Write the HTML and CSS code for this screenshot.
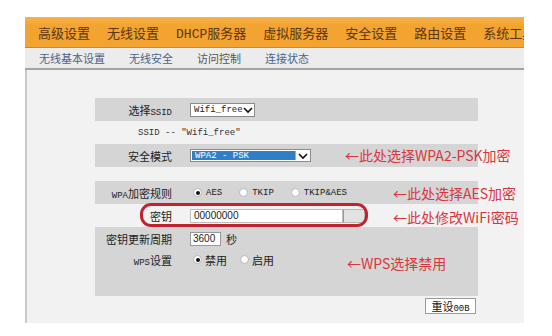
FILE: index.html
```html
<!DOCTYPE html>
<html>
<head>
<meta charset="utf-8">
<link rel="stylesheet" href="styles.css">
</head>
<body>
<div class="frame">
  <div class="nav">
    <span class="nav-item">高级设置</span>
    <span class="nav-item active">无线设置</span>
    <span class="nav-item">DHCP服务器</span>
    <span class="nav-item">虚拟服务器</span>
    <span class="nav-item">安全设置</span>
    <span class="nav-item">路由设置</span>
    <span class="nav-item">系统工具</span>
  </div>
  <div class="subnav">
    <span class="sub-item">无线基本设置</span>
    <span class="sub-item">无线安全</span>
    <span class="sub-item">访问控制</span>
    <span class="sub-item">连接状态</span>
  </div>
  <div class="panel">
    <div class="row grey">
      <span class="label">选择<span class="mono">SSID</span></span>
      <span class="select s1"><span class="sel-text">Wifi_free</span><span class="chev"><svg width="10" height="8" viewBox="0 0 10 8"><path d="M1 2 L5 6 L9 2" fill="none" stroke="#111" stroke-width="1.6"/></svg></span></span>
    </div>
    <div class="row plain">
      <span class="ssid-note">SSID -- "Wifi_free"</span>
    </div>
    <div class="row grey">
      <span class="label">安全模式</span>
      <span class="select s2"><span class="sel-text hl">WPA2 - PSK</span><span class="chev boxed"><svg width="10" height="8" viewBox="0 0 10 8"><path d="M1 2 L5 6 L9 2" fill="none" stroke="#111" stroke-width="1.6"/></svg></span></span>
      <span class="note n1">←此处选择WPA2-PSK加密</span>
    </div>
    <div class="spacer"></div>
    <div class="row grey">
      <span class="label"><span class="mono">WPA</span>加密规则</span>
      <span class="radios">
        <span class="radio-opt"><span class="radio on"></span><span class="mono">AES</span></span>
        <span class="radio-opt"><span class="radio"></span><span class="mono">TKIP</span></span>
        <span class="radio-opt"><span class="radio"></span><span class="mono">TKIP&amp;AES</span></span>
      </span>
      <span class="note n2">←此处选择AES加密</span>
    </div>
    <div class="row plain">
      <span class="label">密钥</span>
      <span class="textbox">00000000</span><span class="textbox-tail"></span>
      <span class="oval"></span>
      <span class="note n3">←此处修改WiFi密码</span>
    </div>
    <div class="block grey">
      <div class="line">
        <span class="label">密钥更新周期</span>
        <span class="numbox">3600</span><span class="unit">秒</span>
      </div>
      <div class="line">
        <span class="label"><span class="mono">WPS</span>设置</span>
        <span class="radios">
          <span class="radio-opt"><span class="radio on"></span>禁用</span>
          <span class="radio-opt"><span class="radio"></span>启用</span>
        </span>
      </div>
      <span class="note n4">←WPS选择禁用</span>
    </div>
    <div class="actions">
      <span class="btn">重设<span class="mono">00B</span></span>
    </div>
  </div>
</div>
</body>
</html>
```

FILE: styles.css
```css
* { box-sizing: border-box; }
body {
  margin: 0;
  background: #ffffff;
  font-family: "Noto Sans CJK SC", sans-serif;
  color: #222;
}
.mono { font-family: "Liberation Mono", monospace; }
.frame {
  margin: 17px 0 0 25px;
  width: 499px;
}
.nav {
  height: 31px;
  background: linear-gradient(#f7b24a, #f3a32f 30%);
  border-bottom: 1px solid #c98a2e;
  display: flex;
  align-items: center;
  padding-left: 13px;
  gap: 17px;
  white-space: nowrap;
  overflow: hidden;
}
.nav-item {
  font-family: "Liberation Mono", "Noto Sans CJK SC", monospace;
  font-size: 13px;
  color: #5a3510;
  position: relative;
}
.nav-item.active::after {
  content: "";
  position: absolute;
  left: 50%;
  margin-left: -5px;
  bottom: -11px;
  border-left: 5px solid transparent;
  border-right: 5px solid transparent;
  border-top: 5px solid #8a8a8a;
}
.subnav {
  height: 22px;
  background: #ececec;
  border-bottom: 2px solid #a3a3a3;
  display: flex;
  align-items: center;
  padding-left: 14px;
  gap: 24px;
  font-size: 11px;
  color: #4d6385;
}
.sub-item:nth-child(3) { color: #555; }
.panel {
  background: #f2f2f2;
  border-left: 2px solid #c9c9c9;
  padding: 28px 0 9px 68px;
}
.row {
  position: relative;
  height: 23px;
  width: 383px;
  display: flex;
  align-items: center;
}
.grey { background: #d5d5d5; }
.label {
  width: 77px;
  text-align: right;
  font-size: 11px;
  color: #222;
  margin-right: 18px;
  flex: none;
}
.label .mono { font-size: 9px; }
.select {
  height: 14px;
  background: #fff;
  border: 1px solid #8a8a8a;
  display: flex;
  align-items: center;
  font-family: "Liberation Mono", monospace;
  font-size: 9px;
  color: #222;
}
.s1 { width: 65px; padding-left: 3px; }
.s1 .sel-text { flex: 1; }
.s1 .chev { width: 12px; display: flex; justify-content: center; }
.s2 { width: 121px; height: 13px; padding: 1px; }
.s2 .hl {
  flex: 1;
  height: 100%;
  background: #2e7fc8;
  color: #fff;
  padding-left: 3px;
  line-height: 11px;
}
.chev.boxed {
  width: 14px;
  height: 100%;
  display: flex;
  align-items: center;
  justify-content: center;
  border-left: 1px solid #aaa;
}
.ssid-note {
  font-family: "Liberation Mono", monospace;
  font-size: 9px;
  color: #333;
  margin-left: 43px;
}
.spacer { height: 14px; }
.radios {
  display: flex;
  align-items: center;
  gap: 14px;
  font-size: 9px;
  color: #222;
}
.radio-opt { display: flex; align-items: center; gap: 4px; }
.block .radio-opt { font-size: 11px; gap: 3px; }
.block .radios { gap: 10px; }
.radio {
  width: 9px;
  height: 9px;
  border-radius: 50%;
  background: #fff;
  border: 1px solid #b5b5b5;
  display: inline-flex;
  align-items: center;
  justify-content: center;
  margin-left: 3px;
}
.radio.on::after {
  content: "";
  width: 4px;
  height: 4px;
  border-radius: 50%;
  background: #111;
}
.textbox {
  width: 153px;
  height: 14px;
  background: #fff;
  border: 1px solid #bdbdbd;
  font-family: "Liberation Sans", sans-serif;
  font-size: 10px;
  line-height: 12px;
  padding-left: 3px;
  color: #222;
  flex: none;
}
.textbox-tail {
  flex: none;
  width: 22px;
  height: 14px;
  border: 1px solid #b8b8b8;
  border-left: 1px solid #9a9a9a;
  background: #e2e2e2;
}
.oval {
  position: absolute;
  left: 45px;
  top: -1px;
  width: 228px;
  height: 24px;
  border: 3px solid #c1232e;
  border-radius: 11px;
}
.block {
  position: relative;
  width: 383px;
  height: 69px;
  padding-top: 1px;
}
.line {
  height: 21px;
  display: flex;
  align-items: center;
}
.numbox {
  width: 31px;
  height: 14px;
  background: #fff;
  border: 1px solid #999;
  font-family: "Liberation Sans", sans-serif;
  font-size: 10px;
  line-height: 12px;
  padding-left: 2px;
}
.unit { font-size: 11px; margin-left: 5px; }
.note {
  position: absolute;
  font-size: 14px;
  color: #d9353f;
  white-space: nowrap;
  line-height: 20px;
}
.n1 { left: 250px; top: 1px; }
.n2 { left: 298px; top: 2px; }
.n3 { left: 298px; top: 3px; }
.n4 { left: 252px; top: 26px; }
.actions {
  width: 381px;
  display: flex;
  justify-content: flex-end;
  margin-top: 2px;
}
.btn {
  height: 16px;
  width: 51px;
  background: #fff;
  border: 1px solid #9a9a9a;
  font-size: 11px;
  line-height: 14px;
  text-align: center;
  color: #111;
}
.btn .mono { font-size: 9px; }
```
